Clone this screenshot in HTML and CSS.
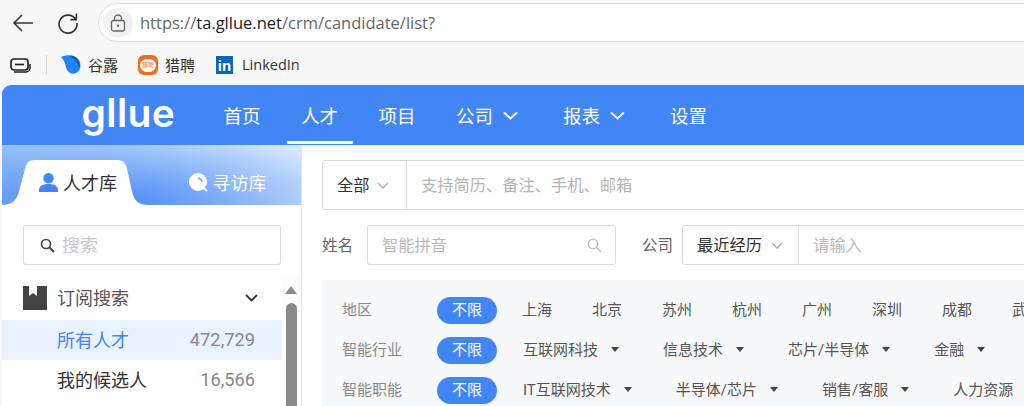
FILE: index.html
```html
<!DOCTYPE html>
<html lang="zh-CN">
<head>
    <meta charset="UTF-8">
    <meta name="viewport" content="width=device-width, initial-scale=1.0">
    <title>Gllue 人才</title>
    <link rel="stylesheet" href="styles.css">
</head>
<body>
    <div class="toolbar">
        <svg class="tool-icon back" width="22" height="20" viewBox="0 0 22 20"><path d="M21 10H2M10 2l-8 8 8 8" fill="none" stroke="#333" stroke-width="1.6"/></svg>
        <svg class="tool-icon reload" width="22" height="22" viewBox="0 0 22 22"><path d="M18.6 7.2A9 9 0 1 0 20 11M19.4 1.6v6h-6" fill="none" stroke="#333" stroke-width="1.6"/></svg>
        <div class="address">
            <span class="lock">
                <svg width="16" height="18" viewBox="0 0 16 18"><rect x="1.5" y="6.5" width="13" height="10.5" rx="2" fill="none" stroke="#666" stroke-width="1.3"/><path d="M4.5 6.5V4.5a3.5 3.5 0 0 1 7 0v2" fill="none" stroke="#666" stroke-width="1.3"/><circle cx="8" cy="11.7" r="1.2" fill="#666"/></svg>
            </span>
            <span class="url">https://<b>ta.gllue.net</b>/crm/candidate/list?</span>
        </div>
    </div>

    <div class="bookmarks">
        <svg class="tabs-icon" width="21" height="15" viewBox="0 0 21 15"><rect x="1" y="1" width="17" height="11" rx="3" fill="none" stroke="#222" stroke-width="1.7"/><path d="M5 6.500h9" stroke="#222" stroke-width="1.7"/><path d="M4 14h12a4 4 0 0 0 4-4V6" fill="none" stroke="#222" stroke-width="1.5"/></svg>
        <span class="bm-sep"></span>
        <a class="bm bm-gulu">
            <svg width="20" height="20" viewBox="0 0 20 20"><path d="M0 2C6-1 14 0 17 4c4 5 3 12-2 14-5 2-9-1-10-6C4 8 3 5 0 2z" fill="#1f86f0"/><path d="M8 1c4-1 8 1 10 5 1 3 1 5 0 7-1-6-5-10-10-12z" fill="#0f5db8"/></svg>
            <span>谷露</span>
        </a>
        <a class="bm bm-liepin">
            <span class="liepin-logo"><span class="liepin-bubble">猎聘</span></span>
            <span>猎聘</span>
        </a>
        <a class="bm bm-linkedin">
            <span class="in-logo">in</span>
            <span>LinkedIn</span>
        </a>
    </div>

    <div class="app">
        <header class="topnav">
            <span class="logo">gllue</span>
            <nav class="nav">
                <a class="nav-item">首页</a>
                <a class="nav-item active">人才</a>
                <a class="nav-item">项目</a>
                <a class="nav-item has-arrow">公司<svg class="nav-arrow" width="15" height="9" viewBox="0 0 15 9"><path d="M1 1.500l6.500 6 6.500-6" fill="none" stroke="#fff" stroke-width="2"/></svg></a>
                <a class="nav-item has-arrow">报表<svg class="nav-arrow" width="15" height="9" viewBox="0 0 15 9"><path d="M1 1.500l6.500 6 6.500-6" fill="none" stroke="#fff" stroke-width="2"/></svg></a>
                <a class="nav-item">设置</a>
            </nav>
        </header>

        <div class="content">
            <aside class="sidebar">
                <div class="tabs">
                    <div class="tab tab-on">
                        <svg class="tab-shape" width="146" height="45" viewBox="0 0 146 45"><path d="M0 45C10 45 15 40 17 31L23 9C24 3 27 0 33 0H115C121 0 124 3 125 9L130 31C132 40 136 45 146 45Z" fill="#fff"/></svg>
                        <svg class="tab-icon" width="19" height="19" viewBox="0 0 19 19"><circle cx="9.500" cy="5.200" r="5.200" fill="#4285f4"/><path d="M0 19v-2c0-4 4-6 9.500-6s9.500 2 9.500 6v2z" fill="#4285f4"/></svg>
                        <span>人才库</span>
                    </div>
                    <div class="tab tab-off">
                        <svg class="tab-icon" width="19" height="19" viewBox="0 0 19 19"><circle cx="9" cy="9" r="9" fill="#fff"/><path d="M9 5a5 5 0 0 1 4 4" fill="none" stroke="#6aa0f7" stroke-width="1.500"/><path d="M13 14l5 4" stroke="#fff" stroke-width="2"/></svg>
                        <span>寻访库</span>
                    </div>
                </div>

                <div class="side-search">
                    <svg width="15" height="15" viewBox="0 0 15 15"><circle cx="6" cy="6" r="4.500" fill="none" stroke="#444" stroke-width="1.700"/><path d="M9.500 9.500l4.500 4.500" stroke="#444" stroke-width="2"/></svg>
                    <span>搜索</span>
                </div>

                <div class="tree">
                    <div class="tree-list">
                        <div class="tree-head">
                            <svg width="24" height="24" viewBox="0 0 24 24"><path d="M0 0h6v10l4-3 4 3V0h10v24H0z" fill="#444"/></svg>
                            <span class="tree-title">订阅搜索</span>
                            <svg class="tree-arrow" width="13" height="8" viewBox="0 0 13 8"><path d="M1 1l5.500 5.500L12 1" fill="none" stroke="#333" stroke-width="1.800"/></svg>
                        </div>
                        <div class="tree-row selected"><span>所有人才</span><em>472,729</em></div>
                        <div class="tree-row"><span>我的候选人</span><em>16,566</em></div>
                    </div>
                    <div class="scrollbar">
                        <i class="scroll-up"></i>
                        <i class="scroll-thumb"></i>
                    </div>
                </div>
            </aside>

            <main class="main">
                <div class="main-search">
                    <div class="search-type"><span>全部</span><svg width="12" height="7" viewBox="0 0 12 7"><path d="M1 1l5 5 5-5" fill="none" stroke="#aaa" stroke-width="1.300"/></svg></div>
                    <div class="search-input"><span>支持简历、备注、手机、邮箱</span></div>
                </div>

                <div class="field-row">
                    <label class="field-label">姓名</label>
                    <div class="name-input">
                        <span>智能拼音</span>
                        <svg width="15" height="15" viewBox="0 0 15 15"><circle cx="6" cy="6" r="4.800" fill="none" stroke="#bbb" stroke-width="1.300"/><path d="M9.500 9.500l4.500 4.500" stroke="#bbb" stroke-width="1.600"/></svg>
                    </div>
                    <label class="field-label company-label">公司</label>
                    <div class="company-input">
                        <div class="company-type"><span>最近经历</span><svg width="12" height="7" viewBox="0 0 12 7"><path d="M1 1l5 5 5-5" fill="none" stroke="#aaa" stroke-width="1.300"/></svg></div>
                        <div class="company-text"><span>请输入</span></div>
                    </div>
                </div>

                <div class="filters">
                    <div class="filter-row">
                        <span class="filter-name">地区</span>
                        <span class="pill">不限</span>
                        <span class="opts opts-city">
                            <a>上海</a><a>北京</a><a>苏州</a><a>杭州</a><a>广州</a><a>深圳</a><a>成都</a><a>武汉</a>
                        </span>
                    </div>
                    <div class="filter-row">
                        <span class="filter-name">智能行业</span>
                        <span class="pill">不限</span>
                        <span class="opts">
                            <a class="drop">互联网科技</a><a class="drop">信息技术</a><a class="drop">芯片/半导体</a><a class="drop">金融</a>
                        </span>
                    </div>
                    <div class="filter-row">
                        <span class="filter-name">智能职能</span>
                        <span class="pill">不限</span>
                        <span class="opts">
                            <a class="drop">IT互联网技术</a><a class="drop">半导体/芯片</a><a class="drop">销售/客服</a><a>人力资源</a>
                        </span>
                    </div>
                </div>
            </main>
        </div>
    </div>
</body>
</html>
```

FILE: styles.css
```css
html, body {
    height: 406px;
    overflow: hidden;
}
body {
    margin: 0;
    background-color: #f7f7f7;
    color: #333;
    font-family: Roboto, "Noto Sans CJK SC", sans-serif;
}
svg {
    display: block;
    flex: none;
}

/* browser chrome */
.toolbar {
    display: flex;
    align-items: center;
    height: 39px;
    padding-top: 3px;
}
.back {
    margin-left: 12px;
}
.reload {
    margin-left: 23px;
}
.address {
    display: flex;
    align-items: center;
    flex: 1;
    height: 39px;
    margin-left: 19px;
    margin-right: -30px;
    box-sizing: border-box;
    padding-left: 4px;
    background: white;
    border: 1px solid #dedede;
    border-radius: 20px;
}
.lock {
    display: flex;
    align-items: center;
    justify-content: center;
    width: 30px;
    height: 30px;
    background: #f1f1f1;
    border-radius: 50%;
}
.url {
    margin-left: 7px;
    padding-bottom: 1px;
    font-family: "Open Sans", "Noto Sans", sans-serif;
    font-size: 16.5px;
    color: #666;
}
.url b {
    font-weight: 400;
    color: #222;
}
.bookmarks {
    display: flex;
    align-items: center;
    height: 40px;
    padding: 3px 0 0 10px;
}
.bm-sep {
    width: 1px;
    height: 20px;
    margin-left: 15px;
    background: #d8d8d8;
}
.bm {
    display: flex;
    align-items: center;
    gap: 7px;
    font-size: 15px;
    color: #333;
}
.bm > span:last-child {
    margin-top: -2px;
}
.bm-gulu {
    margin-left: 14px;
}
.bm-liepin {
    margin-left: 20px;
}
.bm-linkedin {
    margin-left: 21px;
    gap: 9px;
    font-family: "Open Sans", "Noto Sans", sans-serif;
    font-size: 14.5px;
}
.liepin-logo {
    display: flex;
    align-items: center;
    justify-content: center;
    width: 20px;
    height: 20px;
    background: #f26a1b;
    border-radius: 6px;
}
.liepin-bubble {
    width: 16px;
    height: 13px;
    background: white;
    border-radius: 7px;
    font-size: 6px;
    line-height: 12px;
    text-align: center;
    color: #f26a1b;
}
.in-logo {
    width: 17px;
    height: 18px;
    background: #0a66b7;
    font-family: "Liberation Sans", sans-serif;
    font-size: 15px;
    font-weight: 700;
    line-height: 20px;
    text-align: center;
    color: white;
}

/* app header */
.app {
    margin-left: 2px;
    height: 321px;
    background: white;
    border-radius: 9px 0 0 0;
    overflow: hidden;
}
.topnav {
    display: flex;
    height: 60px;
    background: #4285f4;
}
.logo {
    flex: none;
    width: 127px;
    margin-left: 79.5px;
    font-family: Inter, sans-serif;
    font-size: 39px;
    font-weight: 600;
    letter-spacing: 0.4px;
    line-height: 55px;
    color: white;
}
.nav {
    display: flex;
    gap: 11.5px;
    margin-left: 0.5px;
    height: 59px;
}
.nav-item {
    display: flex;
    align-items: center;
    gap: 10px;
    box-sizing: border-box;
    height: 59px;
    padding: 0 14.5px;
    font-size: 18.5px;
    color: white;
}
.nav-item.has-arrow {
    padding-right: 19px;
}
.nav-item.active {
    box-shadow: inset 0 -3px 0 white;
}
.nav-arrow {
    margin-top: 2px;
}

/* sidebar */
.content {
    display: flex;
    height: 261px;
}
.sidebar {
    flex: none;
    width: 299px;
    border-right: 1px solid #e4e6ea;
}
.tabs {
    display: flex;
    height: 60px;
    background:
        radial-gradient(ellipse 280px 75px at 100px 100%, #4587f5 0%, rgba(69,135,245,0) 100%),
        linear-gradient(90deg, #a5c9fa 0%, #d8e9ff 100%);
}
.tab {
    position: relative;
    display: flex;
    align-items: center;
    justify-content: center;
    gap: 5px;
    box-sizing: border-box;
    height: 45px;
    margin-top: 15px;
    font-size: 18px;
}
.tab span {
    position: relative;
    margin-top: -2px;
}
.tab-on {
    width: 146px;
    color: #333;
    padding-left: 6px;
}
.tab-shape {
    position: absolute;
    left: 0;
    top: 0;
}
.tab-icon {
    position: relative;
    margin-top: -1px;
}
.tab-off {
    flex: 1;
    color: white;
    padding-left: 6px;
}
.side-search {
    display: flex;
    align-items: center;
    gap: 7px;
    box-sizing: border-box;
    height: 40px;
    margin: 20px 20px 0 21px;
    padding-left: 16px;
    background: white;
    border: 1px solid #dcdcdc;
    border-radius: 3px;
    font-size: 18px;
    color: #c8c8c8;
}
.side-search span {
    margin-top: -2px;
}
.tree {
    display: flex;
    margin-top: 15px;
}
.tree-list {
    flex: none;
    width: 280px;
}
.tree-head {
    display: flex;
    align-items: center;
    box-sizing: border-box;
    height: 40px;
    padding: 0 0 5px 21px;
}
.tree-title {
    margin-left: 10px;
    margin-top: -2px;
    font-size: 18px;
    color: #555;
}
.tree-arrow {
    margin-left: 116px;
}
.tree-row {
    display: flex;
    align-items: center;
    justify-content: space-between;
    box-sizing: border-box;
    height: 40px;
    padding: 0 27px 2px 55px;
    font-size: 18px;
}
.tree-row em {
    font-style: normal;
    font-size: 18.25px;
    color: #888;
}
.tree-row.selected {
    background: #e9f1fd;
    color: #4285f4;
}
.scrollbar {
    display: flex;
    flex-direction: column;
    align-items: center;
    width: 18px;
    height: 131px;
    margin-top: -5px;
    background: #fcfcfc;
}
.scroll-up {
    width: 0;
    height: 0;
    margin-top: 11px;
    border-left: 6px solid transparent;
    border-right: 6px solid transparent;
    border-bottom: 8px solid #8a8a8a;
}
.scroll-thumb {
    flex: 1;
    width: 11px;
    margin-top: 9px;
    background: #8a8a8a;
    border-radius: 6px 6px 0 0;
}

/* main area */
.main {
    flex: 1;
    min-width: 0;
    box-sizing: border-box;
    padding: 15px 0 0 20px;
    background: linear-gradient(#f5f6f9 0, #fff 15px);
    font-size: 16.25px;
}
.main-search {
    display: flex;
    box-sizing: border-box;
    height: 50px;
    margin-right: -10px;
    background: white;
    border: 1px solid #d9d9d9;
    border-radius: 3px;
}
.search-type {
    display: flex;
    align-items: center;
    gap: 7px;
    flex: none;
    box-sizing: border-box;
    width: 84px;
    padding-left: 14px;
    border-right: 1px solid #d9d9d9;
    color: #333;
}
.search-type span, .search-input span,
.company-type span, .company-text span, .name-input span {
    margin-top: -2px;
}
.search-input {
    display: flex;
    align-items: center;
    padding-left: 14px;
    color: #b4b4b4;
}
.field-row {
    display: flex;
    align-items: center;
    height: 40px;
    margin-top: 15px;
}
.field-label {
    flex: none;
    width: 45px;
    margin-top: -2px;
    font-size: 15.5px;
    color: #666;
}
.company-label {
    width: 40px;
    margin-left: 26px;
}
.name-input {
    display: flex;
    align-items: center;
    justify-content: space-between;
    flex: none;
    box-sizing: border-box;
    width: 249px;
    height: 40px;
    padding: 0 13px 0 14px;
    border: 1px solid #dcdcdc;
    border-radius: 3px;
    color: #b9b9b9;
}
.company-input {
    display: flex;
    flex: 1;
    height: 40px;
    margin-right: -10px;
    box-sizing: border-box;
    border: 1px solid #dcdcdc;
    border-radius: 3px;
}
.company-type {
    display: flex;
    align-items: center;
    gap: 9px;
    flex: none;
    box-sizing: border-box;
    width: 116px;
    padding-left: 14px;
    border-right: 1px solid #dcdcdc;
}
.company-text {
    display: flex;
    align-items: center;
    padding-left: 14px;
    color: #b9b9b9;
}
.filters {
    margin-top: 15px;
    padding-top: 10px;
    height: 130px;
    background: #f7f8fa;
    font-size: 15px;
    overflow: hidden;
}
.filter-row {
    display: flex;
    align-items: center;
    height: 40px;
    padding-left: 20px;
    white-space: nowrap;
}
.filter-name {
    flex: none;
    width: 95px;
    margin-top: -3px;
    color: #888;
}
.pill {
    flex: none;
    width: 60px;
    height: 27px;
    background: #4285f4;
    border-radius: 14px;
    line-height: 26px;
    text-align: center;
    color: white;
}
.opts {
    display: flex;
    flex: none;
    gap: 44px;
    margin-left: 26px;
    margin-top: -3px;
    color: #555;
}
.opts-city {
    gap: 40px;
    margin-left: 25px;
}
.drop {
    display: flex;
    align-items: center;
    gap: 13px;
}
.drop::after {
    content: "";
    margin-top: 2px;
    border-left: 4px solid transparent;
    border-right: 4px solid transparent;
    border-top: 5px solid #444;
}
```
